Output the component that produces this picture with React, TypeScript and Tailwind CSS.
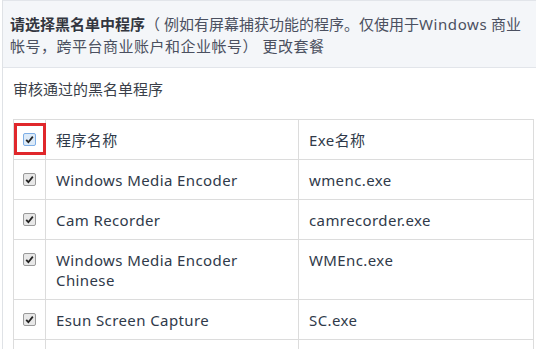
import React from "react";

const font = { fontFamily: '"Noto Sans", "Noto Sans CJK SC", sans-serif' };

function Check({ focus }: { focus?: boolean }) {
  return (
    <span
      className={
        "flex w-[13px] h-[13px] items-center justify-center rounded-[2px] border " +
        (focus ? "border-[#7eaee6] bg-[#dceaf8]" : "border-[#9a9a9a] bg-[#e8e8e8]")
      }
    >
      <svg width="9" height="9" viewBox="0 0 9 9">
        <path d="M1.2 4.8 L3.4 7.2 L7.8 1.6" stroke="#222" strokeWidth="1.8" fill="none" />
      </svg>
    </span>
  );
}

const rows: [string[], string][] = [
  [["Windows Media Encoder"], "wmenc.exe"],
  [["Cam Recorder"], "camrecorder.exe"],
  [["Windows Media Encoder", "Chinese"], "WMEnc.exe"],
  [["Esun Screen Capture"], "SC.exe"],
  [[""], ""],
];

export default function App() {
  return (
    <div className="w-[536px] h-[349px] overflow-hidden bg-white" style={font}>
      <div className="ml-[2px] h-full border-l border-[#dfe2e6]">
        <div className="bg-[#f4f6f9] border-t border-b border-[#e2e5ea] pl-[7px] pr-0 pt-[12px] pb-[10px] text-[15px] leading-[22px] text-[#4b5060] whitespace-nowrap">
          <span className="font-bold text-[#333640]">请选择黑名单中程序</span>（ 例如有屏幕捕获功能的程序。仅使用于<span className="tracking-[0.6px]">Windows</span> 商业
          <br />
          <span className="tracking-[0.5px]">帐号，跨平台商业账户和企业帐号） 更改套餐</span>
        </div>
        <div className="pl-[10px] pt-[10px] text-[15px] leading-[22px] text-[#3a3f4a]">审核通过的黑名单程序</div>
        <div className="pl-[10px] pt-[19px]">
          <table className="w-[521px] border-collapse text-[15px] leading-[20px] tracking-[0.4px] text-[#303a4a]">
            <colgroup>
              <col className="w-[32px]" />
              <col className="w-[253px]" />
              <col />
            </colgroup>
            <tbody>
              <tr>
                <td className="border border-[#dcdcdc] align-middle p-0">
                  <div className="relative flex h-[39px] items-center justify-center">
                    <Check focus />
                    <div className="absolute left-0 top-[3px] w-[32px] h-[32px] border-[3px] border-[#e0272b]" />
                  </div>
                </td>
                <td className="border border-[#dcdcdc] px-[10px] pt-[10px] pb-[9px] align-top">程序名称</td>
                <td className="border border-[#dcdcdc] px-[10px] pt-[10px] pb-[9px] align-top">Exe名称</td>
              </tr>
              {rows.map(([name, exe], i) => (
                <tr key={i}>
                  <td className="border border-[#dcdcdc] align-top p-0">
                    {name[0] !== "" && (
                      <div className="flex h-[39px] items-center justify-center">
                        <Check />
                      </div>
                    )}
                  </td>
                  <td className="border border-[#dcdcdc] px-[10px] pt-[10px] pb-[9px] align-top">
                    {name.map((n, j) => (
                      <div key={j}>{n || "\u00a0"}</div>
                    ))}
                  </td>
                  <td className="border border-[#dcdcdc] px-[10px] pt-[10px] pb-[9px] align-top">{exe || "\u00a0"}</td>
                </tr>
              ))}
            </tbody>
          </table>
        </div>
      </div>
    </div>
  );
}
